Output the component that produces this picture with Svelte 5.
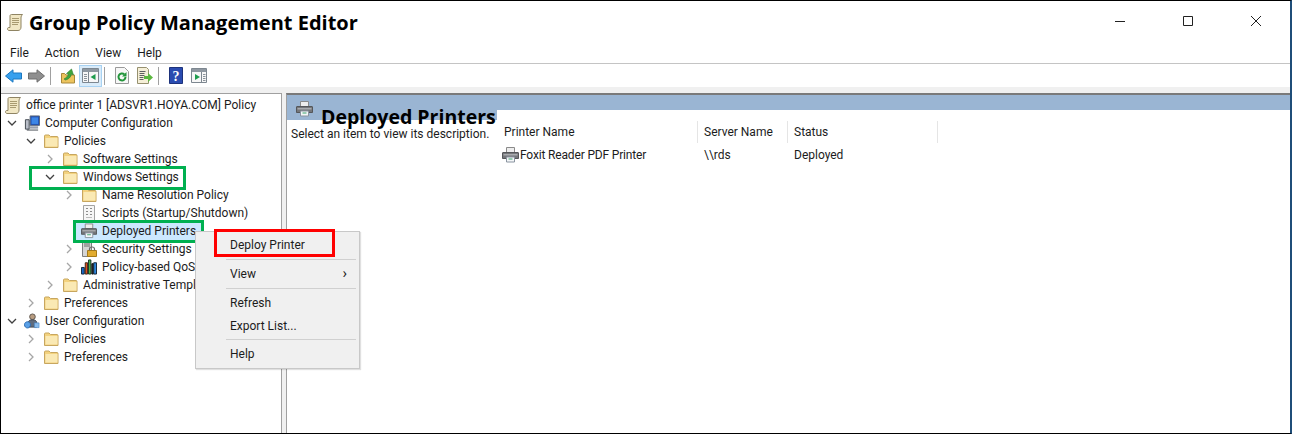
<script lang="ts">
const tree = [
  { depth: 0, exp: 'open', icon: 'computer', label: 'Computer Configuration' },
  { depth: 1, exp: 'open', icon: 'folder', label: 'Policies' },
  { depth: 2, exp: 'closed', icon: 'folder', label: 'Software Settings' },
  { depth: 2, exp: 'open', icon: 'folder', label: 'Windows Settings' },
  { depth: 3, exp: 'closed', icon: 'folder', label: 'Name Resolution Policy' },
  { depth: 3, exp: '', icon: 'script', label: 'Scripts (Startup/Shutdown)' },
  { depth: 3, exp: '', icon: 'printer', label: 'Deployed Printers', selected: true },
  { depth: 3, exp: 'closed', icon: 'security', label: 'Security Settings' },
  { depth: 3, exp: 'closed', icon: 'chart', label: 'Policy-based QoS' },
  { depth: 2, exp: 'closed', icon: 'folder', label: 'Administrative Templates' },
  { depth: 1, exp: 'closed', icon: 'folder', label: 'Preferences' },
  { depth: 0, exp: 'open', icon: 'user', label: 'User Configuration' },
  { depth: 1, exp: 'closed', icon: 'folder', label: 'Policies' },
  { depth: 1, exp: 'closed', icon: 'folder', label: 'Preferences' }
];
const menus = ['File', 'Action', 'View', 'Help'];
</script>

{#snippet scroll()}
  <svg width="16" height="17" viewBox="0 0 16 17">
    <path d="M4.500 .5h11c-1 1-1.500 2-1.500 3.500v9c0 2-1 3.500-3 3.500H2c-1 0-1.500-.8-1.500-1.700S1 13.500 2 13.500h1V2c0-1 .6-1.500 1.500-1.500z" fill="#f1e7c4" stroke="#8f8463"/>
    <path d="M5 4.500h7M5 6.500h7M5 8.500h7M5 10.500h6" stroke="#a89a70"/>
  </svg>
{/snippet}

{#snippet folder()}
  <svg width="16" height="16" viewBox="0 0 16 16">
    <path d="M1.500 14.500V3c0-.6.4-1 1-1h3.500l1.500 1.500h6.500c.6 0 1 .4 1 1v10z" fill="#f3d27e" stroke="#c7a65f"/>
    <path d="M2.500 5h12v8.500h-12z" fill="#fae9b4"/>
  </svg>
{/snippet}

{#snippet printer()}
  <svg width="17" height="16" viewBox="0 0 17 16">
    <path d="M4.500 .5h8v5h-8z" fill="#ededed" stroke="#8a8a8a"/>
    <path d="M1 5.500h15c.3 0 .5.2.5.500v5.500H.5V6c0-.3.2-.5.5-.5z" fill="#74767a" stroke="#55575a"/>
    <path d="M1.500 7h14v1.500h-14z" fill="#a9abae"/>
    <path d="M4.500 10h8v5h-8z" fill="#f4f6f8" stroke="#8a94a0"/>
    <path d="M6.500 12h4" stroke="#3aa36d"/>
  </svg>
{/snippet}

{#snippet computer()}
  <svg width="17" height="16" viewBox="0 0 17 16">
    <path d="M6.500 .5h10v10h-10z" fill="#1e50b8" stroke="#5d6675"/>
    <path d="M8 2h7v7H8z" fill="#3d86e6"/>
    <path d="M1.500 4.500h4v10h-4z" fill="#b9bec8" stroke="#3e444d"/>
    <path d="M6 11.500h9v2.500H6z" fill="#9aa0ac"/>
    <path d="M3 15.500h12" stroke="#3f444c"/>
  </svg>
{/snippet}

{#snippet user()}
  <svg width="17" height="16" viewBox="0 0 17 16">
    <circle cx="9" cy="3.500" r="3" fill="#b89c80" stroke="#5d554e"/>
    <path d="M4.500 14.500V9.500c0-1.500 1.500-2.800 4.500-2.800s4.500 1.300 4.500 2.800v5z" fill="#5f6b7c" stroke="#3f4651"/>
    <path d="M.5 12c0-1.900 1.500-3.200 3.200-3.200s3.200 1.300 3.200 3.200-1.500 3.400-3.200 3.400S.5 13.900.5 12z" fill="#5aa0e6" stroke="#2b6bb1"/>
    <path d="M11 10h5v5h-5z" fill="#8bbcec" stroke="#3f7fc0" stroke-width=".6"/>
  </svg>
{/snippet}

{#snippet chart()}
  <svg width="17" height="16" viewBox="0 0 17 16">
    <path d="M.5 8.500h3v7h-3z" fill="#1968c8" stroke="#123"/>
    <path d="M4.500 3.500h2.500v12H4.500z" fill="#e24a1f" stroke="#321"/>
    <path d="M8 .5h2.500v15H8z" fill="#49b04b" stroke="#132"/>
    <path d="M11.500 4.500h1.500v11h-1.500z" fill="#333" stroke="#111"/>
    <path d="M13.500 3.500h3v12h-3z" fill="#2e86dd" stroke="#123"/>
  </svg>
{/snippet}

{#snippet scriptIcon()}
  <svg width="16" height="16" viewBox="0 0 16 16">
    <path d="M2.500 .5h11v15h-11z" fill="#f6f6f6" stroke="#a3a3a3"/>
    <path d="M5 3.500h2M9 3.500h2M5 6.500h2M9 6.500h2M5 9.500h2M9 9.500h2" stroke="#8c8c8c"/>
    <path d="M5 12.500h6" stroke="#bdbdbd"/>
  </svg>
{/snippet}

{#snippet security()}
  <svg width="16" height="16" viewBox="0 0 16 16">
    <path d="M1.500 .5h9v15h-9z" fill="#d5d5d5" stroke="#7e7e7e"/>
    <path d="M3 3h6M3 5h6" stroke="#6e6e6e"/>
    <path d="M6.500 9.500h9v6h-9z" fill="#e2ac2f" stroke="#a77b17"/>
    <path d="M8.500 9.500V8c0-1.200 1-2 2.500-2s2.500.8 2.500 2v1.500" fill="none" stroke="#6b6b6b" stroke-width="1.200"/>
  </svg>
{/snippet}

{#snippet treeIcon(name)}
  {#if name === 'folder'}{@render folder()}
  {:else if name === 'printer'}{@render printer()}
  {:else if name === 'computer'}{@render computer()}
  {:else if name === 'user'}{@render user()}
  {:else if name === 'chart'}{@render chart()}
  {:else if name === 'script'}{@render scriptIcon()}
  {:else}{@render security()}{/if}
{/snippet}

<div class="window">
  <header class="titlebar">
    <span class="title-icon">{@render scroll()}</span>
    <h1>Group Policy Management Editor</h1>
    <div class="win-controls">
      <svg width="12" height="12" viewBox="0 0 12 12"><path d="M1 6.500h10" stroke="#222"/></svg>
      <svg width="12" height="12" viewBox="0 0 12 12"><path d="M1.500 1.500h9v9h-9z" fill="none" stroke="#222"/></svg>
      <svg width="12" height="12" viewBox="0 0 12 12"><path d="M1 1l10 10M11 1L1 11" stroke="#222"/></svg>
    </div>
  </header>

  <nav class="menubar">
    {#each menus as m}<span>{m}</span>{/each}
  </nav>

  <div class="toolbar">
    <button class="tool" aria-label="Back">
      <svg width="17" height="14" viewBox="0 0 17 14"><path d="M.5 7L8 .8V4h8.500v6H8v3.200z" fill="#37a0ee" stroke="#1d78c0"/></svg>
    </button>
    <button class="tool" aria-label="Forward">
      <svg width="17" height="14" viewBox="0 0 17 14"><path d="M16.500 7L9 .8V4H.5v6H9v3.200z" fill="#8f8f8f" stroke="#6e6e6e"/></svg>
    </button>
    <i class="tsep"></i>
    <button class="tool" aria-label="Up">
      <svg width="16" height="16" viewBox="0 0 16 16">
        <path d="M1.500 15V5.500h3l1.500 1.500h8.500v8z" fill="#edc45e" stroke="#a8893a"/>
        <path d="M4 11c2-1 4-3 4.500-5L6.500 5.500 11.500 1l2 6-2-1c-.5 3-3 5.500-6 6z" fill="#3fa63d" stroke="#2f7d30" stroke-width=".6"/>
      </svg>
    </button>
    <button class="tool active" aria-label="Show hide tree">
      <svg width="17" height="15" viewBox="0 0 17 15">
        <path d="M.5 .5h16v14H.5z" fill="#f7f7f7" stroke="#7d8790"/>
        <path d="M1 1h15v3H1z" fill="#8f98a1"/>
        <path d="M6.500 4v10" stroke="#7d8790"/>
        <path d="M2 6.500h3M2 8.500h3M2 10.500h3M2 12.500h3" stroke="#8a929a"/>
        <path d="M13.500 6v6l-5-3z" fill="#1f9c4e"/>
      </svg>
    </button>
    <i class="tsep"></i>
    <button class="tool" aria-label="Refresh">
      <svg width="16" height="17" viewBox="0 0 16 17">
        <path d="M1.500 .5h9l4 4v12h-13z" fill="#f7f7f7" stroke="#9a9a9a"/>
        <path d="M11.500 10a3.500 3.500 0 1 1-1.200-2.700" fill="none" stroke="#23953b" stroke-width="2"/>
        <path d="M12.500 5v4.500H8z" fill="#23953b"/>
      </svg>
    </button>
    <button class="tool" aria-label="Export">
      <svg width="17" height="17" viewBox="0 0 17 17">
        <path d="M1.500 .5h9l2 2v14h-11z" fill="#f5efd7" stroke="#96906f"/>
        <path d="M3.500 4.500h6M3.500 6.500h5M3.500 8.500h5M3.500 10.500h4M3.500 12.500h4" stroke="#5f5f5f"/>
        <path d="M8 9h4V6l5 4.500L12 15v-3H8z" fill="#5cb83f"/>
      </svg>
    </button>
    <i class="tsep"></i>
    <button class="tool" aria-label="Help">
      <svg width="14" height="17" viewBox="0 0 14 17">
        <path d="M.5 .5h13v16H.5z" fill="#2a4bb0" stroke="#1d327b"/>
        <text x="7" y="14" text-anchor="middle" class="help-glyph">?</text>
      </svg>
    </button>
    <button class="tool" aria-label="Action pane">
      <svg width="16" height="15" viewBox="0 0 16 15">
        <path d="M.5 .5h15v14H.5z" fill="#f7f7f7" stroke="#7d8790"/>
        <path d="M1 1h14v3H1z" fill="#8f98a1"/>
        <path d="M10.500 4v10" stroke="#7d8790"/>
        <path d="M12 6.500h2.500M12 8.500h2.500M12 10.500h2.500M12 12.500h2.500" stroke="#8a929a"/>
        <path d="M4 6v6l5-3z" fill="#1f9c4e"/>
      </svg>
    </button>
  </div>

  <div class="workspace">
    <aside class="tree">
      <div class="row root">
        <span class="icon">{@render scroll()}</span>
        <span class="label">office printer 1 [ADSVR1.HOYA.COM] Policy</span>
      </div>
      {#each tree as item}
        <div class="row" style="padding-left: {4 + item.depth * 19}px">
          <span class="chev">
            {#if item.exp === 'open'}
              <svg width="10" height="10" viewBox="0 0 10 10"><path d="M1 3l4 4 4-4" fill="none" stroke="#404040" stroke-width="1.300"/></svg>
            {:else if item.exp === 'closed'}
              <svg width="10" height="10" viewBox="0 0 10 10"><path d="M3 1l4 4-4 4" fill="none" stroke="#a6a6a6" stroke-width="1.300"/></svg>
            {/if}
          </span>
          <span class="entry" class:selected={item.selected}>
            <span class="icon">{@render treeIcon(item.icon)}</span>
            <span class="label">{item.label}</span>
          </span>
        </div>
      {/each}
    </aside>

    <main class="details">
      <div class="band">
        <div class="band-title">
          <span class="band-icon">{@render printer()}</span>
          <h2>Deployed Printers</h2>
        </div>
        <div class="band-rest"></div>
      </div>
      <div class="body">
        <p class="hint">Select an item to view its description.</p>
        <div class="list">
          <div class="cols head">
            <span class="c1">Printer Name</span>
            <span class="c2">Server Name</span>
            <span class="c3">Status</span>
          </div>
          <div class="cols item">
            <span class="c1 named">{@render printer()}<span class="tight">Foxit Reader PDF Printer</span></span>
            <span class="c2">\\rds</span>
            <span class="c3">Deployed</span>
          </div>
        </div>
      </div>
    </main>
  </div>

  <span class="mark green a"></span>
  <span class="mark green b"></span>

  <div class="ctx">
    <div class="ctx-item">Deploy Printer</div>
    <hr />
    <div class="ctx-item">View<span class="sub">›</span></div>
    <hr />
    <div class="ctx-item">Refresh</div>
    <div class="ctx-item tall">Export List...</div>
    <hr />
    <div class="ctx-item">Help</div>
  </div>
  <span class="mark red"></span>
</div>

<style>
:global(body) {
  margin: 0;
  background: #fff;
}
.window {
  position: relative;
  box-sizing: border-box;
  width: 1292px;
  height: 434px;
  overflow: hidden;
  background: #fff;
  border: 1px solid #000;
  border-right: 2px solid #1f4e79;
  font-family: Roboto, "Open Sans", sans-serif;
  font-size: 12px;
  color: #1c1c1c;
}
.titlebar {
  display: flex;
  align-items: center;
  height: 42px;
  padding-left: 6px;
}
.title-icon {
  display: flex;
  margin-right: 6px;
}
h1 {
  margin: 0;
  font-size: 20px;
  font-weight: 700;
  color: #000;
  font-family: "Open Sans", sans-serif;
}
.win-controls {
  display: flex;
  gap: 56px;
  margin-left: auto;
  margin-bottom: 2px;
  padding-right: 28px;
}
.menubar {
  display: flex;
  height: 20px;
  align-items: center;
  border-bottom: 1px solid #c4c4c4;
  padding-left: 9px;
  gap: 16px;
}
.toolbar {
  display: flex;
  align-items: center;
  height: 23px;
  padding-left: 1px;
}
.tool {
  display: flex;
  align-items: center;
  justify-content: center;
  width: 23px;
  height: 22px;
  padding: 0;
  margin: 0;
  background: none;
  border: 1px solid transparent;
}
.tool.active {
  background: #d9ebf9;
  border-color: #a8d2f2;
}
.tsep {
  width: 1px;
  height: 18px;
  margin: 0 5px 0 2px;
  background: #a0a0a0;
}
.help-glyph {
  font: 700 14px "Liberation Serif", serif;
  fill: #fff;
}
.workspace {
  display: flex;
  height: 340px;
  background: #f0f0f0;
  padding-top: 6px;
}
.tree {
  width: 280px;
  flex: none;
  background: #fff;
  border-top: 1px solid #a0a0a0;
  border-right: 1px solid #a0a0a0;
  overflow: hidden;
  padding-top: 2px;
}
.row {
  display: flex;
  align-items: center;
  height: 18px;
  white-space: nowrap;
}
.row.root {
  padding-left: 4px;
}
.chev {
  display: flex;
  justify-content: center;
  width: 14px;
  margin-right: 5px;
  flex: none;
}
.entry {
  display: flex;
  align-items: center;
}
.entry.selected {
  background: #cce8ff;
  margin-left: -5px;
  padding-left: 5px;
  padding-right: 3px;
}
.icon {
  display: flex;
  width: 16px;
  flex: none;
  margin-right: 3px;
}
.label {
  padding: 0 2px;
  line-height: 18px;
}
.details {
  flex: 1;
  margin-left: 4px;
  background: #fff;
  border-top: 2px solid #7a7a7a;
  border-left: 1px solid #a0a0a0;
}
.band {
  display: flex;
  align-items: flex-start;
}
.band-title {
  display: flex;
  width: 210px;
  height: 25px;
  flex: none;
  background: #9ab5d3;
  padding-left: 9px;
  box-sizing: border-box;
}
.band-icon {
  display: flex;
  margin-top: 6px;
}
h2 {
  margin: 9px 0 0 8px;
  font-size: 19.5px;
  line-height: 26px;
  font-weight: 700;
  color: #000;
  white-space: nowrap;
  font-family: "Open Sans", sans-serif;
}
.band-rest {
  flex: 1;
  height: 15px;
  background: #9ab5d3;
}
.body {
  display: flex;
  padding-left: 4px;
}
.hint {
  margin: 7px 0 0;
  width: 213px;
  flex: none;
  line-height: 14px;
}
.list {
  padding-top: 1px;
}
.cols {
  display: flex;
  height: 22px;
  align-items: center;
}
.cols.item {
  padding-top: 1px;
}
.head span {
  align-self: stretch;
  display: flex;
  align-items: center;
  border-right: 1px solid #e5e5e5;
}
.c1 {
  width: 194px;
  box-sizing: border-box;
}
.c2 {
  width: 90px;
  padding-left: 6px;
  box-sizing: border-box;
}
.c3 {
  width: 150px;
  padding-left: 6px;
  box-sizing: border-box;
}
.named {
  display: flex;
  align-items: center;
  gap: 1px;
  margin-left: -2px;
  width: 196px;
}
.tight {
  letter-spacing: -.16px;
}
.mark {
  position: absolute;
  box-sizing: border-box;
}
.green {
  border: 3px solid #00b050;
}
.green.a {
  left: 28px;
  top: 165px;
  width: 157px;
  height: 24px;
}
.green.b {
  left: 72px;
  top: 219px;
  width: 131px;
  height: 23px;
}
.red {
  left: 213px;
  top: 228px;
  width: 121px;
  height: 28px;
  border: 3px solid #f00;
}
.ctx {
  position: absolute;
  left: 194px;
  top: 230px;
  width: 165px;
  box-sizing: border-box;
  padding: 3px 2px 4px;
  background: #f0f0f0;
  border: 1px solid #c8c8c8;
  box-shadow: 1px 1px 1px rgba(0, 0, 0, .12);
}
.ctx-item {
  position: relative;
  height: 20px;
  line-height: 20px;
  padding-left: 32px;
  white-space: nowrap;
}
.ctx-item.tall {
  margin-top: 3px;
  margin-bottom: -1px;
}
.sub {
  position: absolute;
  right: 10px;
  top: -1px;
  font-size: 15px;
}
hr {
  margin: 4px 1px 4px 28px;
  border: 0;
  border-top: 1px solid #d0d0d0;
}
</style>
